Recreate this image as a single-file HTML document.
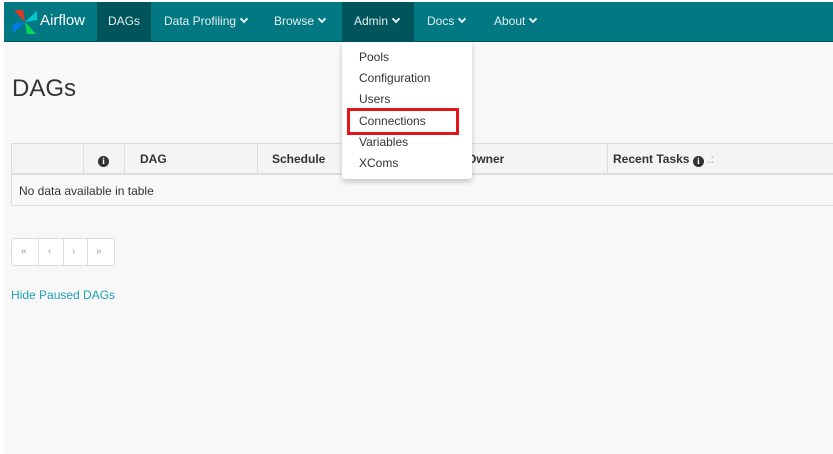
<!DOCTYPE html>
<html><head><style>
*{margin:0;padding:0;box-sizing:border-box}
body{width:833px;height:454px;background:#fff;font-family:"Liberation Sans",sans-serif;position:relative;overflow:hidden;font-size:12px;color:#333}
.page{position:absolute;left:4px;top:2px;right:0;bottom:0;background:#f8f8f8}
.nav{position:absolute;left:4px;top:2px;right:0;height:40px;background:#017882;border-bottom:1px solid #01545b}
.nav a{position:absolute;top:0;height:40px;line-height:38px;color:#e4eff0;font-size:12px;text-decoration:none}
.act{background:#00545c;color:#fff}
.chev{display:inline-block;width:6px;height:6px;border-right:2px solid currentColor;border-bottom:2px solid currentColor;transform:rotate(45deg);margin-left:5px;position:relative;top:-3px}
.menu{position:absolute;left:342px;top:42px;width:130px;height:137px;background:#fff;box-shadow:0 3px 6px rgba(0,0,0,.2);border-radius:0 0 3px 3px}
.menu div{position:absolute;left:17px;font-size:12px;color:#333}
h1{position:absolute;left:12px;top:75px;font-size:24px;font-weight:normal;color:#333}
.tbl{position:absolute;left:11px;top:143px;right:0;height:63px;border:1px solid #ddd;border-right:none;background:#f8f8f8}
.th{position:absolute;top:0;height:31px;border-bottom:2px solid #ddd;width:100%;background:#f4f4f4}
.th > span{position:absolute;top:8px;font-weight:bold;font-size:12px}
.vl{position:absolute;top:0;height:31px;border-left:1px solid #ddd}
.pg{position:absolute;left:11px;top:238px;width:104px;height:28px;border:1px solid #ddd;border-radius:3px;background:#fff}
.pg span{position:absolute;top:7px;font-size:10px;color:#999}
.pg i{position:absolute;top:0;height:26px;border-left:1px solid #ddd}
.info{display:inline-block;width:11px;height:11px;border-radius:50%;background:#333;color:#fff;font-size:9px;text-align:center;line-height:11px;font-weight:bold;font-family:"Liberation Serif",serif;vertical-align:-1px}
</style></head><body>
<div class="page"></div>
<div class="nav">
<svg style="position:absolute;left:7px;top:6px" width="28" height="28" viewBox="0 0 28 28">
<polygon points="14,14 3,2 12,2" fill="#e43921"/>
<polygon points="14,14 26,3 26,12" fill="#00c7d4"/>
<polygon points="14,14 25,26 16,26" fill="#04d659"/>
<polygon points="14,14 2,25 2,16" fill="#017cee"/>
</svg>
<a style="left:36px;font-size:15px;color:#fff">Airflow</a>
<a class="act" style="left:93px;width:54px;text-align:center">DAGs</a>
<a style="left:160px">Data Profiling<span class="chev"></span></a>
<a style="left:270px">Browse<span class="chev"></span></a>
<a class="act" style="left:338px;width:72px;padding-left:12px">Admin<span class="chev"></span></a>
<a style="left:423px">Docs<span class="chev"></span></a>
<a style="left:490px">About<span class="chev"></span></a>
</div>
<h1>DAGs</h1>
<div class="tbl">
<div class="th">
<div class="vl" style="left:71px"></div><div class="vl" style="left:112px"></div><div class="vl" style="left:245px"></div><div class="vl" style="left:595px"></div>
<span style="left:86px"><span class="info">i</span></span>
<span style="left:128px">DAG</span>
<span style="left:260px">Schedule</span>
<span style="left:455px">Owner</span>
<span style="left:601px">Recent Tasks <span class="info">i</span> <span style="color:#999;font-weight:normal">.:</span></span>
</div>
<div style="position:absolute;left:7px;top:40px">No data available in table</div>
</div>
<div class="menu">
<div style="top:8px">Pools</div>
<div style="top:29px">Configuration</div>
<div style="top:50px">Users</div>
<div style="top:72px">Connections</div>
<div style="top:93px">Variables</div>
<div style="top:114px">XComs</div>
</div>
<div style="position:absolute;left:347px;top:108px;width:112px;height:27px;border:3px solid #e8141c"></div>
<div class="pg">
<span style="left:9px">«</span><i style="left:26px"></i>
<span style="left:36px">‹</span><i style="left:51px"></i>
<span style="left:60px">›</span><i style="left:75px"></i>
<span style="left:84px">»</span>
</div>
<div style="position:absolute;left:11px;top:288px;color:#1fa0b5;font-size:12px">Hide Paused DAGs</div>
</body></html>
